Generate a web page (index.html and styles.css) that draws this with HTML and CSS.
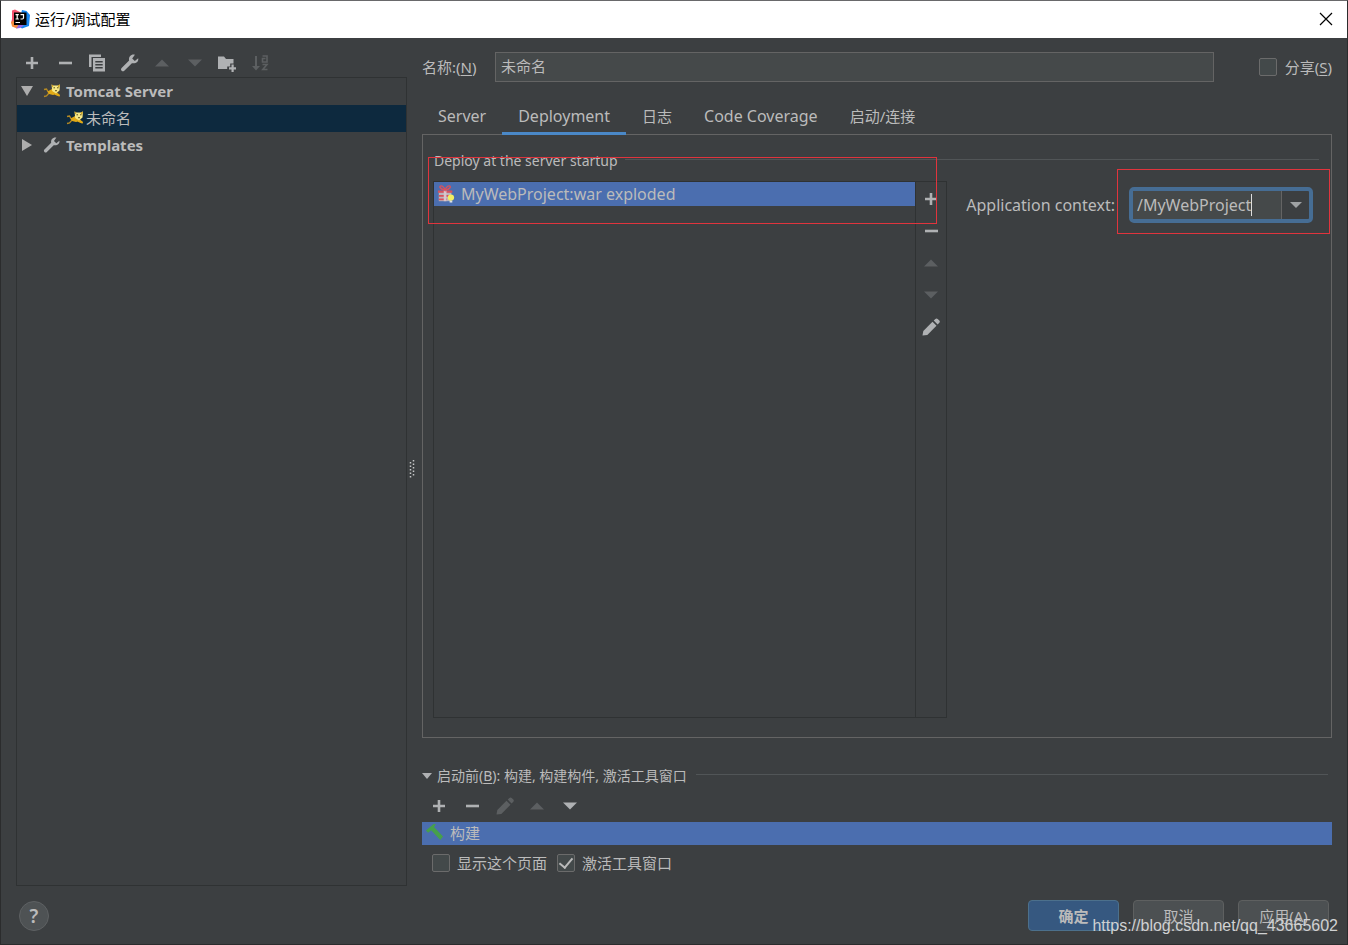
FILE: index.html
```html
<!DOCTYPE html>
<html lang="zh-CN">
<head>
<meta charset="utf-8">
<title>运行/调试配置</title>
<link rel="stylesheet" href="styles.css">
</head>
<body>
<svg class="sprite" aria-hidden="true">
  <symbol id="plus" viewBox="0 0 20 20"><path d="M8.700 4h2.600v4.700H16v2.600h-4.700V16H8.700v-4.700H4V8.700h4.700z"/></symbol>
  <symbol id="minus" viewBox="0 0 20 20"><path d="M4 8.700h13v2.600H4z"/></symbol>
  <symbol id="copy" viewBox="0 0 20 20"><path d="M2 1.500h12V4H4.500v10H2z"/><path fill-rule="evenodd" d="M6 5h12v13.500H6zM8.300 8v1.500h7.400V8zm0 3v1.500h7.400V11zm0 3v1.500h7.400V14z"/></symbol>
  <symbol id="wrench" viewBox="0 0 20 20"><path d="M18.200 5.200 14.800 8l-2.600-2.500 2.700-3.700C11.600.8 8.300 3.600 9.100 7.500L1.600 15c-.8.800-.8 1.900 0 2.700.8.800 1.900.8 2.700 0l7.600-7.500c4 .8 7-1.700 6.300-5z"/></symbol>
  <symbol id="up" viewBox="0 0 20 20"><path d="M3 13.500 10 6.500l7 7z"/></symbol>
  <symbol id="down" viewBox="0 0 20 20"><path d="M3 6.500h14l-7 7z"/></symbol>
  <symbol id="folder" viewBox="0 0 20 20"><path d="M1 3.500h6l2 2.500h7.500v4.500h-3.300v3h-3V16H1z"/><path d="M14.500 11.500h2.200v2.800H19v2.200h-2.300V19h-2.200v-2.500H12v-2.200h2.500z"/></symbol>
  <symbol id="sort" viewBox="0 0 20 20"><path d="M5 3h2v10h3l-4 4.500L2 13h3z"/><path d="M12.500 3H17v6h-4.500V5.500h3M12.500 11.500H17l-4.200 5H17.500" fill="none" stroke="currentColor" stroke-width="1.600"/></symbol>
  <symbol id="pencil" viewBox="0 0 20 20"><path d="m1.500 18.500.8-4.500 9.200-9.200 4 4-9.200 9.200z"/><path d="m12.700 3.600 1.700-1.700c.7-.7 1.600-.7 2.300 0l1.600 1.600c.7.700.7 1.600 0 2.300l-1.700 1.700z"/></symbol>
  <symbol id="cat" viewBox="0 0 18 16"><path d="M1 6.500 3.500 6l2 3.500M1 13.500l2.500-.5 2.500-3" fill="none" stroke="#b58a24" stroke-width="1.300"/><path d="M4.500 8.500 9 6l5 3.500 3 2.500-.5 1.500-4.500-2-2 .5-4-1z" fill="#e0a916"/><path d="m12 11 4.500 1.800" stroke="#e0a916" stroke-width="1.500"/><path d="m8.500 1.500 2 1h4l2.500-1-.5 6-3.500 3-3.800-2.500z" fill="#f6e886"/><path d="m8.500 1.500 2 1-1 2zM17 1.500l-2.500 1 1.500 2.500z" fill="#c99d1b"/><path d="M10.500 4.800h1.500M14 4.800h1.500M12 7.700h2" stroke="#5b4e1c"/></symbol>
</svg>

<header class="titlebar">
  <svg class="logo" viewBox="0 0 20 20" aria-hidden="true"><path d="m2 1.500 3-1 6 3-2 8-8 3L2 10z" fill="#f4526f"/><path d="m1 13 4-2 5 6-3 2.500-5-2z" fill="#f48a3c"/><path d="m12 1 4.500 1L20 6l-1 11-7 2.500-4-3z" fill="#1685ef"/><path d="m6 19.500 3-4 5 1-4 2.500z" fill="#9266e8"/><path d="M4 3.500h12.500v12.500H4z"/><path d="M5.500 5.700h3.300M7.200 5.700v4.300M5.500 10h3.300M10.500 5.700h3v3.100q0 1.200-1.200 1.200h-1.800M5.500 13.500h4.500" fill="none" stroke="#fff" stroke-width="1.200"/></svg>
  <h1 class="title">运行/调试配置</h1>
  <button class="close" aria-label="关闭"><svg viewBox="0 0 14 14"><path d="m1 1 12 12M13 1 1 13" stroke="#000" stroke-width="1.200"/></svg></button>
</header>

<div class="body">
  <aside class="sidebar">
    <div class="toolbar">
      <button class="tool" aria-label="添加"><svg><use href="#plus"/></svg></button>
      <button class="tool" aria-label="移除"><svg><use href="#minus"/></svg></button>
      <button class="tool" aria-label="复制"><svg><use href="#copy"/></svg></button>
      <button class="tool" aria-label="编辑模板"><svg><use href="#wrench"/></svg></button>
      <button class="tool" aria-label="上移" disabled><svg><use href="#up"/></svg></button>
      <button class="tool" aria-label="下移" disabled><svg><use href="#down"/></svg></button>
      <button class="tool" aria-label="新建文件夹"><svg><use href="#folder"/></svg></button>
      <button class="tool" aria-label="排序" disabled><svg><use href="#sort"/></svg></button>
    </div>
    <ul class="tree">
      <li class="node group"><svg class="arrow" viewBox="0 0 12 12"><path d="M0 1h12L6 11z"/></svg><svg class="node-icon"><use href="#cat"/></svg>Tomcat Server</li>
      <li class="node child selected"><svg class="node-icon"><use href="#cat"/></svg>未命名</li>
      <li class="node group"><svg class="arrow" viewBox="0 0 12 12"><path d="M1 0v12l10-6z"/></svg><svg class="node-icon"><use href="#wrench"/></svg>Templates</li>
    </ul>
  </aside>

  <div class="splitter"><svg class="grip" viewBox="0 0 6 18" aria-hidden="true"><path d="M1.500 2v16M4.500 0v16" stroke="#c4c6c7" stroke-width="1.500" stroke-dasharray="1.500 2"/></svg></div>

  <main class="content">
    <div class="name-row">
      <label class="name-label" for="name">名称:(<u>N</u>)</label>
      <input class="name-input" id="name" type="text" value="未命名">
      <label class="check share"><input class="box" type="checkbox"><span>分享(<u>S</u>)</span></label>
    </div>

    <nav class="tabs" role="tablist">
      <button class="tab latin" role="tab">Server</button>
      <button class="tab latin active" role="tab" aria-selected="true">Deployment</button>
      <button class="tab" role="tab">日志</button>
      <button class="tab latin" role="tab">Code Coverage</button>
      <button class="tab" role="tab">启动/连接</button>
    </nav>

    <section class="panel">
      <h2 class="legend">Deploy at the server startup</h2>
      <div class="deploy">
        <div class="artifacts">
          <ul class="artifact-list">
            <li class="artifact latin"><svg class="artifact-icon" viewBox="0 0 20 20"><path d="M2 8h14v10H2z" fill="#b9b6bd"/><path d="M1 6h16v2.500H1zM2 11h14v2H2zM2 15h9v2H2z" fill="#d9525c"/><path d="M7.500 6h3v12h-3z" fill="#d9c6cb"/><path d="M9 5.500C3 5 2 1 4.500 1 7 1 8 3 9 5.500 10 3 11 1 13.500 1c2.500 0 1.500 4-4.500 4.500z" fill="none" stroke="#d9525c" stroke-width="1.600"/><circle cx="15.500" cy="14" r="3.500" fill="#f1ef62"/><path d="M14 17.500h3v2h-3z" fill="#dde0e5"/></svg>MyWebProject:war exploded</li>
          </ul>
          <div class="side-tools">
            <button class="tool" aria-label="添加构件"><svg><use href="#plus"/></svg></button>
            <button class="tool" aria-label="移除构件"><svg><use href="#minus"/></svg></button>
            <button class="tool" aria-label="构件上移" disabled><svg><use href="#up"/></svg></button>
            <button class="tool" aria-label="构件下移" disabled><svg><use href="#down"/></svg></button>
            <button class="tool" aria-label="编辑构件"><svg><use href="#pencil"/></svg></button>
          </div>
        </div>
        <div class="context latin">
          <label class="context-label" for="context">Application context:</label>
          <div class="context-field">
            <div class="combo">
              <div class="combo-text"><input class="combo-input" id="context" type="text" size="10" value="/MyWebProject"></div>
              <button class="combo-button" aria-label="展开"><svg viewBox="0 0 12 8"><path d="M0 1h12L6 7z"/></svg></button>
            </div>
            <div class="mark mark-context"></div>
          </div>
        </div>
      </div>
      <div class="mark mark-artifact"></div>
    </section>

    <section class="before">
      <h2 class="legend before-title"><svg class="fold" viewBox="0 0 10 8"><path d="M0 1h10L5 7z"/></svg><span>启动前(<u>B</u>): 构建, 构建构件, 激活工具窗口</span></h2>
      <div class="toolbar before-tools">
        <button class="tool" aria-label="添加任务"><svg><use href="#plus"/></svg></button>
        <button class="tool" aria-label="移除任务"><svg><use href="#minus"/></svg></button>
        <button class="tool" aria-label="编辑任务" disabled><svg><use href="#pencil"/></svg></button>
        <button class="tool" aria-label="任务上移" disabled><svg><use href="#up"/></svg></button>
        <button class="tool" aria-label="任务下移"><svg><use href="#down"/></svg></button>
      </div>
      <ul class="tasks"><li class="task"><svg class="task-icon" viewBox="0 0 20 20"><path d="M1 8 9 1l2.500.3-2 3 9.500 10-3 3.700L6.500 7.500 3.300 10.300z" fill="#46a04b"/></svg>构建</li></ul>
      <div class="checks">
        <label class="check"><input class="box" type="checkbox"><span>显示这个页面</span></label>
        <label class="check"><input class="box" type="checkbox" checked><span>激活工具窗口</span></label>
      </div>
    </section>
  </main>
</div>

<footer class="footer">
  <button class="help" aria-label="帮助">?</button>
  <div class="actions">
    <button class="btn primary">确定</button>
    <button class="btn">取消</button>
    <button class="btn">应用(<u>A</u>)</button>
  </div>
  <div class="watermark">https://blog.csdn.net/qq_43665602</div>
</footer>
</body>
</html>
```
FILE: styles.css
```css
* { box-sizing: border-box; }

body {
  margin: 0;
  min-height: 100vh;
  display: flex;
  flex-direction: column;
  background: #3c3f41;
  border: 1px solid #2b2c2d;
  border-top-color: #69696b;
  color: #bbbbbb;
  font: 15px/22px "Noto Sans", "Noto Sans CJK SC", sans-serif;
}

button, input { font: inherit; color: inherit; }
button { background: none; border: 0; padding: 0; }
ul { list-style: none; margin: 0; padding: 0; }
h1, h2 { margin: 0; font-weight: 400; }
svg { display: block; fill: currentColor; flex: none; }
u { text-underline-offset: 2px; }
.sprite { display: none; }
.latin { font-size: 16px; }

/* Title bar */
.titlebar {
  display: flex;
  align-items: center;
  height: 37px;
  padding: 0 14px 2px 9px;
  background: #fff;
  color: #000;
}
.logo { width: 20px; height: 20px; }
.title { flex: 1; margin-left: 5px; font-size: 15px; }
.close svg { width: 14px; height: 14px; }

/* Main layout */
.body { flex: 1; display: flex; padding: 0 15px; }
.sidebar { flex: 0 1 391px; display: flex; flex-direction: column; }
.splitter { width: 15px; display: flex; align-items: center; justify-content: flex-start; padding-left: 2px; }
.grip { width: 6px; height: 18px; margin-top: 14px; }
.content { flex: 1; min-width: 0; display: flex; flex-direction: column; }

/* Icon buttons */
.toolbar { display: flex; align-items: center; justify-content: space-between; }
.sidebar .toolbar { width: 260px; height: 39px; padding: 10px 6px 0; }
.tool { color: #afb1b3; }
.tool svg { width: 20px; height: 20px; }
.tool:disabled { color: #5c5f61; }

/* Configuration tree */
.tree { flex: 1; border: 1px solid #2f3233; }
.node { display: flex; align-items: center; height: 27px; padding-bottom: 1px; }
.group { padding-left: 4px; font-weight: 700; }
.child { padding-left: 49px; }
.selected { background: #0d293e; }
.arrow { width: 12px; height: 12px; margin-right: 10px; color: #adadad; }
.node-icon { width: 18px; height: 18px; margin-right: 5px; color: #afb1b3; }
.child .node-icon { margin-right: 2px; }

/* Name row */
.name-row { display: flex; align-items: center; margin-top: 14px; }
.name-label { width: 73px; }
.name-input {
  flex: 1;
  min-width: 0;
  height: 30px;
  padding: 0 5px 3px;
  background: #45494a;
  border: 1px solid #646464;
}
.check { display: flex; align-items: center; gap: 7px; }
.share { margin-left: 45px; gap: 8px; }
.box {
  appearance: none;
  width: 18px;
  height: 18px;
  margin: 0;
  background: #43494a;
  border: 1px solid #6b6b6b;
  border-radius: 2px;
  display: grid;
  place-items: center;
}
.box:checked::after {
  content: "";
  width: 6px;
  height: 11px;
  margin-bottom: 3px;
  border: solid #bbbbbb;
  border-width: 0 2px 2px 0;
  transform: rotate(40deg);
}

/* Tabs */
.tabs { position: relative; z-index: 1; display: flex; margin: 14px 0 -1px; height: 39px; }
.tab { padding: 3px 16px 0; border-bottom: 3px solid transparent; }
.active { border-color: #4a88c7; }

/* Deployment panel */
.panel {
  position: relative;
  flex: 1;
  display: flex;
  flex-direction: column;
  padding: 16px 12px 19px 10px;
  border: 1px solid #646464;
}
.legend { display: flex; align-items: center; gap: 7px; font-size: 14px; line-height: 20px; }
.panel .legend { padding-left: 1px; }
.legend::after { content: ""; flex: 1; height: 1px; margin-bottom: 4px; background: #515557; }
.deploy { flex: 1; display: flex; margin-top: 10px; }
.artifacts { flex: 1; display: flex; border: 1px solid #2f3233; }
.artifact-list { flex: 1; }
.artifact { display: flex; align-items: center; gap: 6px; height: 24px; padding-left: 3px; padding-bottom: 1px; background: #4b6eaf; }
.artifact-icon { width: 18px; height: 18px; }
.side-tools {
  display: flex;
  flex-direction: column;
  align-items: center;
  gap: 12px;
  width: 31px;
  padding-top: 7px;
  border-left: 1px solid #2f3233;
}
.context { display: flex; align-items: flex-start; gap: 14px; padding: 6px 6px 0 19px; }
.context-label { line-height: 36px; }
.context-field { position: relative; }
.combo {
  display: flex;
  width: 184px;
  height: 36px;
  border: 4px solid #466d94;
  border-radius: 5px;
}
.combo-text { flex: 1; display: flex; align-items: center; padding-left: 4px; background: #45494a; border-right: 1px solid #646464; }
.combo-input {
  field-sizing: content;
  height: 22px;
  padding: 0;
  background: none;
  border: 0;
  border-right: 1px solid #dddddd;
  outline: 0;
}
.combo-button { width: 27px; display: grid; place-items: center; color: #9fa2a4; }
.combo-button svg { width: 12px; height: 8px; }

/* Highlight frames over the panel */
.mark { position: absolute; border: 1px solid #e0343d; pointer-events: none; }
.mark-artifact { left: 5px; top: 22px; width: 509px; height: 67px; }
.mark-context { inset: -18px -17px -11px -12px; }

/* Before launch */
.before { margin-top: 28px; }
.before-title { padding-right: 4px; gap: 5px; }
.fold { width: 10px; height: 8px; color: #afb1b3; }
.before-title::after { margin-left: 4px; }
.before-tools { width: 164px; height: 36px; padding: 4px 6px 0 7px; }
.task { display: flex; align-items: center; gap: 6px; height: 23px; padding: 0 0 2px 3px; background: #4b6eaf; }
.task-icon { width: 19px; height: 19px; }
.checks { display: flex; gap: 10px; margin: 7px 0 12px 10px; }

/* Footer */
.footer {
  position: relative;
  display: flex;
  align-items: center;
  justify-content: space-between;
  padding: 14px 18px 13px;
}
.help {
  width: 30px;
  height: 30px;
  border: 1px solid #5e6163;
  border-radius: 50%;
  background: #4e5254;
  font-size: 19px;
  font-weight: 600;
}
.actions { display: flex; gap: 14px; }
.btn { width: 91px; height: 31px; background: #4c5052; border: 1px solid #5e6060; border-radius: 4px; }
.primary { background: #365880; border-color: #4c708c; font-weight: 700; }
.watermark {
  position: absolute;
  right: 9px;
  bottom: 8px;
  color: #d0d1d2;
  font: 16px/20px "Liberation Sans", sans-serif;
}
```
